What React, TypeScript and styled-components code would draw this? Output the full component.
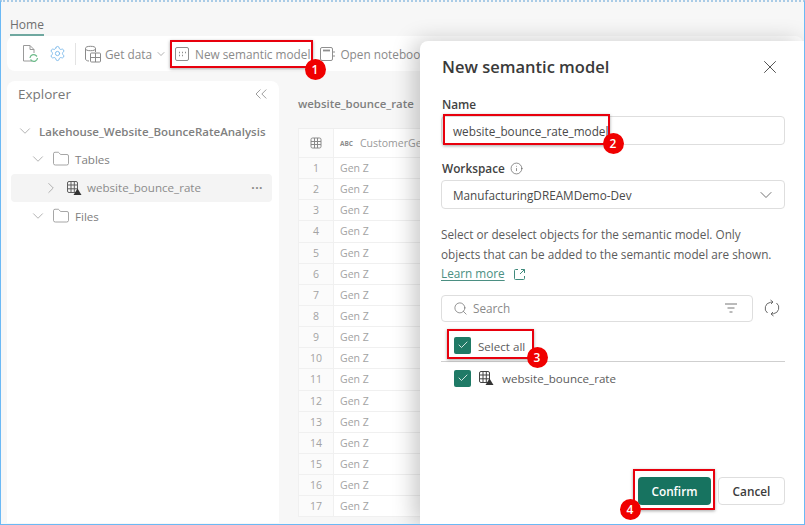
import React from 'react';
import styled, { createGlobalStyle } from 'styled-components';
import { Check, ChevronDown, ChevronRight, ChevronsLeft, Folder, Info, Search, Settings, X } from 'lucide-react';

const GlobalStyle = createGlobalStyle`
  html, body {
    margin: 0;
    padding: 0;
    background: #fff;
  }
  * {
    box-sizing: border-box;
  }
`;

const Frame = styled.div`
  position: relative;
  width: 805px;
  height: 525px;
  overflow: hidden;
  display: flex;
  flex-direction: column;
  padding: 0 1px 1px 1px;
  background: #f7f7f7;
  border: 1px solid #6bb9f5;
  border-top: 2px dotted #a9cbe6;
  font-family: 'Open Sans', 'Noto Sans', sans-serif;
  color: #6b6b6b;
`;

const TabBar = styled.div`
  height: 30px;
  padding: 10px 0 0 8px;
  flex-shrink: 0;
`;

const HomeTab = styled.div`
  display: inline-block;
  height: 18px;
  font-size: 12px;
  line-height: 14px;
  color: #6f6f6f;
  border-bottom: 2px solid #6fa8a0;
`;

const Toolbar = styled.div`
  height: 35px;
  margin: 4px 0 0 5px;
  background: #fff;
  border-radius: 8px;
  display: flex;
  align-items: center;
  padding-left: 14px;
  white-space: nowrap;
  font-size: 11.8px;
  color: #8a8a8a;
  flex-shrink: 0;
`;

const ToolIcon = styled.span`
  display: inline-flex;
  margin-right: ${p => p.$gap ?? 5}px;
`;

const ToolDivider = styled.span`
  width: 1px;
  height: 22px;
  background: #e3e3e3;
  margin: 0 8px 0 9px;
`;

const ToolItem = styled.span`
  display: inline-flex;
  align-items: center;
  gap: ${p => p.$inner ?? 0}px;
  margin-right: ${p => p.$gap ?? 0}px;
`;

const Content = styled.div`
  flex: 1;
  display: flex;
  margin: 10px 0 0 5px;
  min-height: 0;
`;

const Sidebar = styled.aside`
  width: 272px;
  background: #fff;
  border-radius: 8px 8px 0 0;
  padding: 0 7px 0 4px;
  flex-shrink: 0;
`;

const SidebarHead = styled.div`
  height: 26px;
  padding: 0 1px 0 7px;
  display: flex;
  align-items: center;
  justify-content: space-between;
  font-size: 13.5px;
  color: #777;
`;

const TreeRow = styled.div`
  height: 28.3px;
  display: flex;
  align-items: center;
  padding-left: ${p => p.$indent}px;
  border-radius: 4px;
  background: ${p => (p.$active ? '#f4f4f4' : 'transparent')};
  font-size: ${p => (p.$bold ? 11.5 : 11.6)}px;
  color: ${p => (p.$active ? '#8c8c8c' : '#808080')};
  font-weight: ${p => (p.$bold ? 600 : 400)};
  white-space: nowrap;
`;

const TreeList = styled.div`
  margin-top: 10px;
`;

const TreeText = styled.span`
  margin-left: ${p => p.$gap ?? 5}px;
  flex: 1;
`;

const IconSlot = styled.span`
  display: inline-flex;
  margin-left: ${p => p.$left ?? 5}px;
`;

const More = styled.span`
  color: #8a8a8a;
  font-size: 12px;
  letter-spacing: 0.5px;
  margin-right: 9px;
  font-weight: 700;
  line-height: 8px;
`;

const Main = styled.main`
  flex: 1;
  padding: 15px 0 0 19px;
  min-width: 0;
`;

const MainTitle = styled.div`
  font-size: 11.4px;
  font-weight: 600;
  color: #808080;
  height: 32px;
`;

const Table = styled.div`
  width: 200px;
  border-top: 1px solid #eee;
  font-size: 10.5px;
  color: #a3a3a3;
`;

const Row = styled.div`
  display: grid;
  grid-template-columns: 36px 1fr;
  height: ${p => (p.$head ? 29 : 21.15)}px;
  border-bottom: 1px solid #f0f0f0;
`;

const IndexCell = styled.div`
  display: flex;
  align-items: center;
  justify-content: center;
  background: #fbfbfb;
  border-left: 1px solid #f0f0f0;
  border-right: 1px solid #f0f0f0;
`;

const DataCell = styled.div`
  display: flex;
  align-items: center;
  padding-left: 6px;
  background: #fff;
  white-space: nowrap;
`;

const HeadLabel = styled.span`
  font-size: 10.5px;
  color: #9a9a9a;
  margin-left: 7px;
`;

const AbcTag = styled.span`
  font-size: 6.5px;
  font-weight: 700;
  color: #8c8c8c;
`;

const Panel = styled.section`
  position: absolute;
  left: 419px;
  top: 39px;
  right: 0;
  bottom: 0;
  background: #fff;
  border-top-left-radius: 8px;
  box-shadow: -6px 0 22px rgba(0, 0, 0, 0.22);
  padding: 13px 19px 0 21px;
  display: flex;
  flex-direction: column;
`;

const PanelHead = styled.div`
  display: flex;
  align-items: center;
  justify-content: space-between;
  height: 26px;
  padding: 0 4px 0 1px;
`;

const PanelTitle = styled.h2`
  margin: 0;
  font-size: 16.5px;
  line-height: 24px;
  font-weight: 600;
  color: #3a3a3a;
`;

const FieldLabel = styled.label`
  display: flex;
  align-items: center;
  gap: 5px;
  height: 16px;
  margin-top: ${p => p.$top}px;
  padding-left: 1px;
  font-size: 11.8px;
  font-weight: 600;
  color: #424242;
`;

const Field = styled.div`
  height: 29px;
  margin-top: 4px;
  border: 1px solid #dedede;
  border-radius: 4px;
  display: flex;
  align-items: center;
  justify-content: space-between;
  padding: 0 8px 0 11px;
  font-size: 11.75px;
  color: #4a4a4a;
`;

const HelpText = styled.p`
  margin: 16px 0 0;
  font-size: 11.75px;
  line-height: 19.5px;
  color: #5c5c5c;
`;

const LearnLink = styled.a`
  color: #4b8f82;
  text-decoration: underline;
  text-underline-offset: 2px;
  margin-right: 8px;
`;

const LinkIcon = styled.svg`
  vertical-align: -3px;
`;

const SearchRow = styled.div`
  display: flex;
  align-items: center;
  margin-top: 11px;
`;

const SearchBox = styled.div`
  width: 312px;
  height: 27px;
  border: 1px solid #dedede;
  border-radius: 4px;
  display: flex;
  align-items: center;
  padding: 0 14px 0 11px;
  font-size: 11.75px;
  color: #8a8a8a;
`;

const SearchText = styled.span`
  flex: 1;
  margin-left: 5px;
`;

const RefreshSlot = styled.span`
  display: inline-flex;
  margin-left: 11px;
`;

const CheckRow = styled.div`
  display: flex;
  align-items: ${p => (p.$divider ? 'flex-end' : 'center')};
  padding-left: 13px;
  padding-bottom: ${p => (p.$divider ? 7 : 0)}px;
  height: ${p => p.$height}px;
  font-size: 11.6px;
  color: #5c5c5c;
  border-bottom: ${p => (p.$divider ? '1px solid #cfcfcf' : 'none')};
`;

const CheckBox = styled.span`
  width: 17px;
  height: 17px;
  border-radius: 2px;
  background: #1f7a66;
  display: inline-flex;
  align-items: center;
  justify-content: center;
  margin-right: 7px;
`;

const Footer = styled.div`
  margin-top: auto;
  margin-bottom: 19px;
  display: flex;
  justify-content: flex-end;
  gap: 7px;
`;

const PrimaryButton = styled.button`
  width: 73px;
  height: 28px;
  border: none;
  border-radius: 4px;
  background: #177360;
  color: #fff;
  font: 600 11.8px 'Open Sans', 'Noto Sans', sans-serif;
`;

const GhostButton = styled.button`
  width: 67px;
  height: 28px;
  border: 1px solid #dedede;
  border-radius: 4px;
  background: #fff;
  color: #3c3c3c;
  font: 600 11.8px 'Open Sans', 'Noto Sans', sans-serif;
`;

const Callout = styled.div`
  position: absolute;
  left: ${p => p.$x}px;
  top: ${p => p.$y}px;
  width: ${p => p.$w}px;
  height: ${p => p.$h}px;
  border: 2px solid #e8000d;
  box-shadow: 0 1px 3px rgba(0, 0, 0, 0.35);
`;

const Badge = styled.div`
  position: absolute;
  left: ${p => p.$x - 10.5}px;
  top: ${p => p.$y - 10.5}px;
  width: 21px;
  height: 21px;
  border-radius: 50%;
  background: #f00000;
  color: #fff;
  font-size: 12px;
  font-weight: 600;
  display: flex;
  align-items: center;
  justify-content: center;
`;

const TableGlyph: React.FC<{ color?: string }> = ({ color = '#5f5f5f' }) => (
  <svg width="16" height="16" viewBox="0 0 16 16" fill="none" stroke={color} strokeWidth="1">
    <rect x="1.5" y="1.5" width="10" height="11" rx="1.5" />
    <path d="M1.5 5h10M1.5 8.8h10M5 1.5v11M8.3 1.5v11" />
    <path d="M11.5 8.5l4 6.5h-8z" fill="#333" stroke="none" />
  </svg>
);

const RefreshFileIcon = () => (
  <svg width="18" height="20" viewBox="0 0 18 20" fill="none">
    <path d="M11 17H2.500V1.500H9L13 5.500V9M9 1.500V5.500H13" stroke="#9a9a9a" />
    <path d="M9 14a3.600 3.600 0 0 1 6-2.500l1 1M16.500 14a3.600 3.600 0 0 1-6 2.500l-1-1" stroke="#6dbb8a" strokeWidth="1.200" />
  </svg>
);

const GetDataIcon = () => (
  <svg width="18" height="18" viewBox="0 0 18 18" fill="none" stroke="#8a8a8a">
    <ellipse cx="6.500" cy="3.500" rx="5" ry="2.200" />
    <path d="M1.500 3.500V14c0 1 1.500 2 3.500 2" />
    <path d="M11.500 3.500V7" />
    <rect x="6.500" y="8" width="10" height="9" rx="1" />
    <path d="M6.500 12.500h10M11.500 8v9" />
  </svg>
);

const SemanticIcon = () => (
  <svg width="16" height="16" viewBox="0 0 16 16" fill="none" stroke="#8f8f8f">
    <rect x="1.500" y="1.500" width="13" height="13" rx="1.500" />
    <path d="M5 6.500h1M8 6.500h1M11 6.500h1M5 9.500h1M8 9.500h1" strokeWidth="1.300" />
  </svg>
);

const NotebookIcon = () => (
  <svg width="16" height="16" viewBox="0 0 16 16" fill="none" stroke="#8f8f8f">
    <rect x="1.500" y="1.500" width="12" height="13" rx="1.500" />
    <path d="M4 4.500h7" strokeWidth="1.800" />
    <path d="M15 5v2M15 9v2" />
  </svg>
);

const SmallTable = () => (
  <svg width="12" height="12" viewBox="0 0 12 12" fill="none" stroke="#8a8a8a">
    <rect x="1" y="1" width="10" height="10" rx="1.500" />
    <path d="M1 4.500h10M1 7.500h10M4.500 1v10M7.500 1v10" />
  </svg>
);

const RefreshIcon = () => (
  <svg width="16" height="18" viewBox="0 0 16 18" fill="none" stroke="#6a6a6a">
    <path d="M3.500 14A6 6 0 0 1 6.500 3.300L9 3M6.500 1L9 3 7 5" />
    <path d="M12.500 4A6 6 0 0 1 9.500 14.700L7 15M9.500 17L7 15 9 13" />
  </svg>
);

const FilterIcon = () => (
  <svg width="14" height="12" viewBox="0 0 14 12" fill="none" stroke="#777">
    <path d="M1 2h12M3.500 6h7M5.500 10h3" />
  </svg>
);

const rows = Array.from({ length: 17 }, (_, i) => i + 1);

export default function App() {
  return (
    <Frame>
      <GlobalStyle />
      <TabBar>
        <HomeTab>Home</HomeTab>
      </TabBar>
      <Toolbar>
        <ToolIcon $gap={10}>
          <RefreshFileIcon />
        </ToolIcon>
        <Settings size={17} color="#7ab8ea" strokeWidth={1.3} />
        <ToolDivider />
        <ToolIcon $gap={3}>
          <GetDataIcon />
        </ToolIcon>
        <ToolItem $gap={7} $inner={3}>
          Get data
          <ChevronDown size={12} strokeWidth={1.3} />
        </ToolItem>
        <ToolIcon $gap={5}>
          <SemanticIcon />
        </ToolIcon>
        <ToolItem $gap={9}>New semantic model</ToolItem>
        <ToolIcon $gap={5}>
          <NotebookIcon />
        </ToolIcon>
        <ToolItem>Open notebook</ToolItem>
      </Toolbar>
      <Content>
        <Sidebar>
          <SidebarHead>
            Explorer
            <ChevronsLeft size={20} color="#8a8a8a" strokeWidth={1} />
          </SidebarHead>
          <TreeList>
            <TreeRow $indent={5} $bold>
              <ChevronDown size={18} strokeWidth={1} color="#999" />
              <TreeText $gap={5}>Lakehouse_Website_BounceRateAnalysis</TreeText>
            </TreeRow>
            <TreeRow $indent={18}>
              <ChevronDown size={18} strokeWidth={1} color="#999" />
              <IconSlot>
                <Folder size={18} strokeWidth={1} color="#8a8a8a" />
              </IconSlot>
              <TreeText>Tables</TreeText>
            </TreeRow>
            <TreeRow $indent={31} $active>
              <ChevronRight size={18} strokeWidth={1} color="#999" />
              <IconSlot $left={6}>
                <TableGlyph />
              </IconSlot>
              <TreeText>website_bounce_rate</TreeText>
              <More>···</More>
            </TreeRow>
            <TreeRow $indent={18}>
              <ChevronDown size={18} strokeWidth={1} color="#999" />
              <IconSlot>
                <Folder size={18} strokeWidth={1} color="#8a8a8a" />
              </IconSlot>
              <TreeText>Files</TreeText>
            </TreeRow>
          </TreeList>
        </Sidebar>
        <Main>
          <MainTitle>website_bounce_rate</MainTitle>
          <Table>
            <Row $head>
              <IndexCell>
                <SmallTable />
              </IndexCell>
              <DataCell>
                <AbcTag>ABC</AbcTag>
                <HeadLabel>CustomerGeneration</HeadLabel>
              </DataCell>
            </Row>
            {rows.map(n => (
              <Row key={n}>
                <IndexCell>{n}</IndexCell>
                <DataCell>Gen Z</DataCell>
              </Row>
            ))}
          </Table>
        </Main>
      </Content>
      <Panel>
        <PanelHead>
          <PanelTitle>New semantic model</PanelTitle>
          <X size={22} strokeWidth={1} color="#444" />
        </PanelHead>
        <FieldLabel $top={16}>Name</FieldLabel>
        <Field>website_bounce_rate_model</Field>
        <FieldLabel $top={15}>
          Workspace
          <Info size={13} strokeWidth={1.2} color="#555" />
        </FieldLabel>
        <Field>
          ManufacturingDREAMDemo-Dev
          <ChevronDown size={20} strokeWidth={1} color="#555" />
        </Field>
        <HelpText>
          Select or deselect objects for the semantic model. Only
          <br />
          objects that can be added to the semantic model are shown.
          <br />
          <LearnLink>Learn more</LearnLink>
          <LinkIcon width="13" height="13" viewBox="0 0 13 13" fill="none" stroke="#3f8a7c">
            <path d="M5 1.500H2.500a1 1 0 0 0-1 1v8a1 1 0 0 0 1 1h8a1 1 0 0 0 1-1V8M8 1.500h3.500V5M11.500 1.500L7 6" />
          </LinkIcon>
        </HelpText>
        <SearchRow>
          <SearchBox>
            <Search size={15} strokeWidth={1.1} color="#666" />
            <SearchText>Search</SearchText>
            <FilterIcon />
          </SearchBox>
          <RefreshSlot>
            <RefreshIcon />
          </RefreshSlot>
        </SearchRow>
        <CheckRow $height={40} $divider>
          <CheckBox>
            <Check size={12} color="#fff" strokeWidth={1.6} />
          </CheckBox>
          Select all
        </CheckRow>
        <CheckRow $height={33}>
          <CheckBox>
            <Check size={12} color="#fff" strokeWidth={1.6} />
          </CheckBox>
          <ToolIcon $gap={8}>
            <TableGlyph color="#444" />
          </ToolIcon>
          website_bounce_rate
        </CheckRow>
        <Footer>
          <PrimaryButton>Confirm</PrimaryButton>
          <GhostButton>Cancel</GhostButton>
        </Footer>
      </Panel>
      <Callout $x={169} $y={38} $w={143} $h={28} />
      <Badge $x={314} $y={67}>1</Badge>
      <Callout $x={442} $y={112} $w={167} $h={31} />
      <Badge $x={612} $y={141}>2</Badge>
      <Callout $x={446} $y={327} $w={87} $h={30} />
      <Badge $x={536} $y={355}>3</Badge>
      <Callout $x={632} $y={467} $w={82} $h={41} />
      <Badge $x={629} $y={507}>4</Badge>
    </Frame>
  );
}
